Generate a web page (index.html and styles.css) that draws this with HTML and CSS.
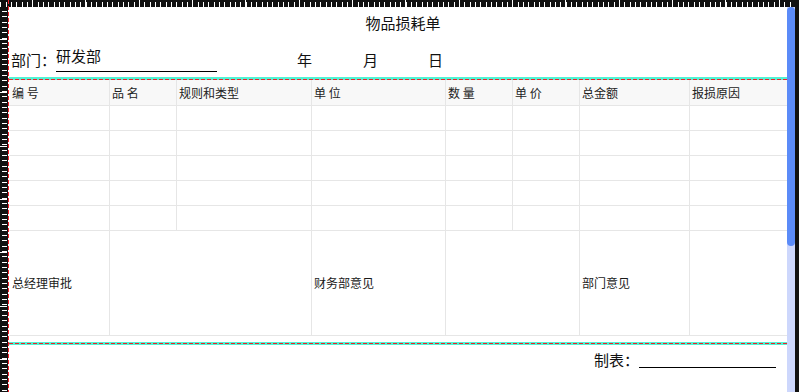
FILE: index.html
```html
<!DOCTYPE html>
<html lang="zh-CN">
<head>
<meta charset="utf-8">
<title>物品损耗单</title>
<link rel="stylesheet" href="styles.css">
</head>
<body>
<div class="app">
  <div class="top-ruler"></div>
  <div class="right-edge"></div>
  <div class="left-ruler"></div>
  <main class="canvas">
    <h1 class="title">物品损耗单</h1>
    <div class="dept-row">
      <span class="label">部门：</span>
      <span class="field">研发部</span>
      <span class="label date-y">年</span>
      <span class="label date-m">月</span>
      <span class="label date-d">日</span>
    </div>
    <div class="band band-top"></div>
    <div class="sheet">
      <div class="cell head first">编 号</div>
      <div class="cell head">品 名</div>
      <div class="cell head">规则和类型</div>
      <div class="cell head">单 位</div>
      <div class="cell head">数 量</div>
      <div class="cell head">单 价</div>
      <div class="cell head">总金额</div>
      <div class="cell head last">报损原因</div>

      <div class="cell first"></div><div class="cell"></div><div class="cell"></div><div class="cell"></div><div class="cell"></div><div class="cell"></div><div class="cell"></div><div class="cell last"></div>
      <div class="cell first"></div><div class="cell"></div><div class="cell"></div><div class="cell"></div><div class="cell"></div><div class="cell"></div><div class="cell"></div><div class="cell last"></div>
      <div class="cell first"></div><div class="cell"></div><div class="cell"></div><div class="cell"></div><div class="cell"></div><div class="cell"></div><div class="cell"></div><div class="cell last"></div>
      <div class="cell first"></div><div class="cell"></div><div class="cell"></div><div class="cell"></div><div class="cell"></div><div class="cell"></div><div class="cell"></div><div class="cell last"></div>
      <div class="cell first"></div><div class="cell"></div><div class="cell"></div><div class="cell"></div><div class="cell"></div><div class="cell"></div><div class="cell"></div><div class="cell last"></div>

      <div class="cell big first">总经理审批</div>
      <div class="cell big span2"></div>
      <div class="cell big">财务部意见</div>
      <div class="cell big span2"></div>
      <div class="cell big">部门意见</div>
      <div class="cell big last"></div>
    </div>
    <div class="band band-bottom"></div>
    <div class="footer-row">
      <span class="label">制表：</span>
      <span class="sign-line"></span>
    </div>
  </main>
  <div class="scrollbar"><div class="thumb"></div></div>
  <div class="guide-v"></div>
</div>
</body>
</html>
```

FILE: styles.css
```css
* { box-sizing: border-box; }
html, body { margin: 0; padding: 0; background: #fff; }
body {
  font-family: "Noto Sans CJK SC", "Noto Sans", sans-serif;
  color: #1a1a1a;
  overflow: hidden;
}
.app {
  position: relative;
  display: grid;
  grid-template-columns: 8px 779px 8px 4px;
  grid-template-rows: 7px 385px;
  width: 799px;
  height: 392px;
  overflow: hidden;
}
.top-ruler {
  grid-column: 1 / 4;
  grid-row: 1;
  background-color: #111;
  background-image:
    repeating-linear-gradient(to right, #fff 0 1px, transparent 1px 53px, #fff 53px 54px, transparent 54px 107px, #fff 107px 108px, transparent 108px 160px),
    repeating-linear-gradient(to right, #fff 0 1px, transparent 1px 5px, #fff 5px 6px, transparent 6px 11px, #fff 11px 12px, transparent 12px 16px);
  background-size: 160px 7px, 16px 5px;
  background-position: 32px 0, 11px 2px;
  background-repeat: repeat-x;
}
.right-edge {
  grid-column: 4;
  grid-row: 1 / 3;
  background: #111;
}
.left-ruler {
  grid-column: 1;
  grid-row: 2;
  background-color: #111;
  background-image:
    repeating-linear-gradient(to bottom, #fff 0 1px, transparent 1px 53px, #fff 53px 54px, transparent 54px 107px, #fff 107px 108px, transparent 108px 160px),
    repeating-linear-gradient(to bottom, #fff 0 1px, transparent 1px 5px, #fff 5px 6px, transparent 6px 11px, #fff 11px 12px, transparent 12px 16px);
  background-size: 7px 160px, 5px 16px;
  background-position: 0 32px, 2px 4px;
  background-repeat: repeat-y;
}
.canvas {
  grid-column: 2;
  grid-row: 2;
  padding-left: 1px;
  background: #fff;
  display: flex;
  flex-direction: column;
}
.title {
  margin: 6px 0 0;
  padding-left: 10px;
  font-size: 15px;
  font-weight: 400;
  line-height: 20px;
  text-align: center;
  color: #111;
}
.dept-row {
  display: flex;
  align-items: flex-start;
  margin-top: 13px;
  height: 26px;
  padding-left: 2px;
  font-size: 15px;
  color: #111;
}
.label {
  display: block;
  margin-top: 4px;
  line-height: 20px;
  white-space: nowrap;
}
.field {
  display: block;
  width: 161px;
  line-height: 20px;
  padding-bottom: 5px;
  border-bottom: 1px solid #000;
}
.date-y { margin-left: 80px; }
.date-m { margin-left: 51px; }
.date-d { margin-left: 50px; }

.band {
  height: 3px;
  background-color: #52f2d3;
}
.band-top {
  margin-top: 5px;
  background-image: repeating-linear-gradient(to right, #f0202a 0 4px, transparent 4px 6px);
  background-size: 100% 1px;
  background-position: 0 2px;
  background-repeat: no-repeat;
}
.band-bottom {
  margin-top: 6px;
  background-image: repeating-linear-gradient(to right, #f0202a 0 4px, transparent 4px 6px);
  background-size: 100% 1px;
  background-position: 0 1px;
  background-repeat: no-repeat;
}

.sheet {
  display: grid;
  grid-template-columns: 101px 67px 135px 134px 67px 67px 110px 97px;
  grid-template-rows: 26px repeat(5, 25px) 105px;
  width: 778px;
  font-size: 12px;
}
.cell {
  border-right: 1px solid #e6e6e6;
  border-bottom: 1px solid #e6e6e6;
  padding-left: 2px;
  display: flex;
  align-items: center;
  line-height: 16px;
  white-space: nowrap;
  color: #1a1a1a;
}
.cell.first { padding-left: 3px; }
.cell.last { border-right: none; }
.cell.head {
  background: #f8f8f8;
  color: #222;
  padding-top: 1px;
}
.cell.span2 { grid-column: span 2; }

.footer-row {
  display: flex;
  justify-content: flex-end;
  align-items: flex-start;
  margin-top: 5px;
  padding-right: 11px;
  font-size: 15px;
  color: #111;
}
.footer-row .label { margin-top: 0; }
.sign-line {
  display: block;
  width: 137px;
  height: 18px;
  border-bottom: 1px solid #000;
}

.scrollbar {
  grid-column: 3;
  grid-row: 2;
  background: #cdd7fc;
}
.thumb {
  height: 239px;
  background: #5b8bf8;
  border-radius: 4px;
}
.guide-v {
  position: absolute;
  left: 8px;
  top: 0;
  bottom: 0;
  width: 1px;
  background-image: repeating-linear-gradient(to bottom, #f0202a 0 4px, transparent 4px 6px);
}
```
